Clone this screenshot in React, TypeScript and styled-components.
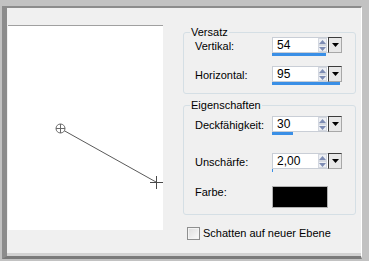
import styled, { createGlobalStyle } from 'styled-components';

const GlobalStyle = createGlobalStyle`
  html, body {
    margin: 0;
    padding: 0;
    background: #c0c0c0;
  }
  body {
    font-family: 'Liberation Sans', Arial, sans-serif;
    font-size: 11px;
    color: #000;
  }
`;

type SpinProps = { value: string; percent: number };

const SpinBox = ({ value, percent }: SpinProps) => (
  <SpinWrap>
    <SpinTop>
      <Field>{value}</Field>
      <Arrows>
        <ArrowBtn>
          <svg width='7' height='4' viewBox='0 0 7 4'>
            <path d='M0 4 L3.5 0 L7 4 Z' fill='#7d8cb4' />
          </svg>
        </ArrowBtn>
        <ArrowBtn>
          <svg width='7' height='4' viewBox='0 0 7 4'>
            <path d='M0 0 L3.5 4 L7 0 Z' fill='#7d8cb4' />
          </svg>
        </ArrowBtn>
      </Arrows>
      <DropBtn>
        <svg width='7' height='4' viewBox='0 0 7 4'>
          <path d='M0 0 L3.5 4 L7 0 Z' fill='#000' />
        </svg>
      </DropBtn>
    </SpinTop>
    <Bar>
      <BarFill style={{ width: `${percent}%` }} />
    </Bar>
  </SpinWrap>
);

const App = () => {
  return (
    <>
      <GlobalStyle />
      <Frame>
        <Dialog>
          <PreviewColumn>
            <Preview>
              <svg width='155' height='204' viewBox='0 0 155 204'>
                <line x1='55' y1='104' x2='148' y2='156' stroke='#5a5a5a' strokeWidth='1' />
                <circle cx='52.5' cy='102.5' r='4.5' fill='#fff' stroke='#6a6a6a' strokeWidth='1' />
                <line x1='52.5' y1='98' x2='52.5' y2='107' stroke='#6a6a6a' strokeWidth='1' />
                <line x1='48' y1='102.5' x2='57' y2='102.5' stroke='#6a6a6a' strokeWidth='1' />
                <line x1='148.5' y1='150' x2='148.5' y2='163' stroke='#4a4a4a' strokeWidth='1' />
                <line x1='142' y1='156.5' x2='155' y2='156.5' stroke='#4a4a4a' strokeWidth='1' />
              </svg>
            </Preview>
          </PreviewColumn>

          <Panel>
            <Group>
              <Legend>Versatz</Legend>
              <Rows $gap={10}>
                <Row>
                  <Label>Vertikal:</Label>
                  <SpinBox value='54' percent={77} />
                </Row>
                <Row>
                  <Label>Horizontal:</Label>
                  <SpinBox value='95' percent={97.5} />
                </Row>
              </Rows>
            </Group>

            <Group $top={6} $padTop={6} $padBottom={6}>
              <Legend>Eigenschaften</Legend>
              <Rows $gap={18}>
                <Row>
                  <Label>Deckfähigkeit:</Label>
                  <SpinBox value='30' percent={30} />
                </Row>
                <Row>
                  <Label>Unschärfe:</Label>
                  <SpinBox value='2,00' percent={2} />
                </Row>
                <Row $top $mt={-4}>
                  <Label>Farbe:</Label>
                  <Swatch />
                </Row>
              </Rows>
            </Group>

            <CheckRow>
              <CheckBox />
              <span>Schatten auf neuer Ebene</span>
            </CheckRow>
          </Panel>
        </Dialog>
      </Frame>
    </>
  );
};

const Frame = styled.div`
  width: 369px;
  height: 261px;
  box-sizing: border-box;
  padding: 6px 7px 2px 2px;
  background: #c2c2c2;
`;

const Dialog = styled.div`
  box-sizing: border-box;
  height: 100%;
  display: flex;
  background: #f0f0f0;
  border-left: 5px solid #8c8c8c;
  border-top: 2px solid #8c8c8c;
  border-bottom: 3px solid #7a7a7a;
  border-right: 1px solid #ffffff;
  box-shadow: inset 0 -3px 0 #d2d2d2;
`;

const PreviewColumn = styled.div`
  width: 156px;
  padding-top: 17px;
  flex-shrink: 0;
`;

const Preview = styled.div`
  margin-left: 1px;
  width: 155px;
  height: 204px;
  background: #ffffff;
  border-top: 1px solid #a0a0a0;

  svg {
    display: block;
  }
`;

const Panel = styled.div`
  margin-left: 20px;
  width: 173px;
  padding-top: 19px;
  display: flex;
  flex-direction: column;
`;

const Group = styled.fieldset<{ $top?: number; $padTop?: number; $padBottom?: number }>`
  margin: ${(p) => p.$top ?? 0}px 0 0 0;
  padding: ${(p) => p.$padTop ?? 0}px 13px ${(p) => p.$padBottom ?? 8}px 6px;
  border: 1px solid #d5dfe5;
  border-radius: 3px;
  min-inline-size: 0;
`;

const Legend = styled.legend`
  padding: 0 1px;
  line-height: 10px;
  font-size: 11px;
`;

const Rows = styled.div<{ $gap: number }>`
  display: flex;
  flex-direction: column;
  gap: ${(p) => p.$gap}px;
  padding-left: 5px;
`;

const Row = styled.div<{ $top?: boolean; $mt?: number }>`
  display: grid;
  grid-template-columns: 77px 70px;
  align-items: ${(p) => (p.$top ? 'start' : 'center')};
  margin-top: ${(p) => p.$mt ?? 0}px;
`;

const Label = styled.span`
  line-height: 13px;
  white-space: nowrap;
`;

const SpinWrap = styled.div`
  display: flex;
  flex-direction: column;
  width: 70px;
`;

const SpinTop = styled.div`
  display: flex;
  height: 16px;
`;

const Field = styled.div`
  box-sizing: border-box;
  width: 46px;
  height: 16px;
  background: #ffffff;
  border: 1px solid #c9ced6;
  border-right: none;
  padding-left: 4px;
  font-size: 12px;
  line-height: 14px;
`;

const Arrows = styled.div`
  box-sizing: border-box;
  width: 10px;
  display: flex;
  flex-direction: column;
  background: #ffffff;
  border-top: 1px solid #c9ced6;
  border-bottom: 1px solid #c9ced6;
`;

const ArrowBtn = styled.div`
  flex: 1;
  display: flex;
  align-items: center;
  justify-content: center;
  background: #eef0f4;
  border: 1px solid #d4d8e0;
  margin: 0 1px 0 0;

  svg {
    display: block;
  }
`;

const DropBtn = styled.div`
  box-sizing: border-box;
  width: 14px;
  height: 16px;
  display: flex;
  align-items: center;
  justify-content: center;
  background: #e8e8e8;
  border: 1px solid;
  border-color: #3c3c3c #a8a8a8 #a8a8a8 #3c3c3c;

  svg {
    display: block;
  }
`;

const Bar = styled.div`
  height: 3px;
  width: 70px;
`;

const BarFill = styled.div`
  height: 100%;
  background: #3a8fe6;
`;

const Swatch = styled.div`
  width: 56px;
  height: 22px;
  background: #000000;
  border: 1px solid #b0b0b0;
  box-sizing: border-box;
`;

const CheckRow = styled.label`
  margin-top: 12px;
  padding-left: 4px;
  display: flex;
  align-items: center;
  gap: 3px;
  line-height: 13px;
`;

const CheckBox = styled.span`
  box-sizing: border-box;
  width: 13px;
  height: 13px;
  border: 1px solid #8e8f8f;
  background: linear-gradient(135deg, #dcdcdc, #fbfbfb);
  box-shadow: inset 0 0 0 1px #f4f4f4;
`;

export default App;
